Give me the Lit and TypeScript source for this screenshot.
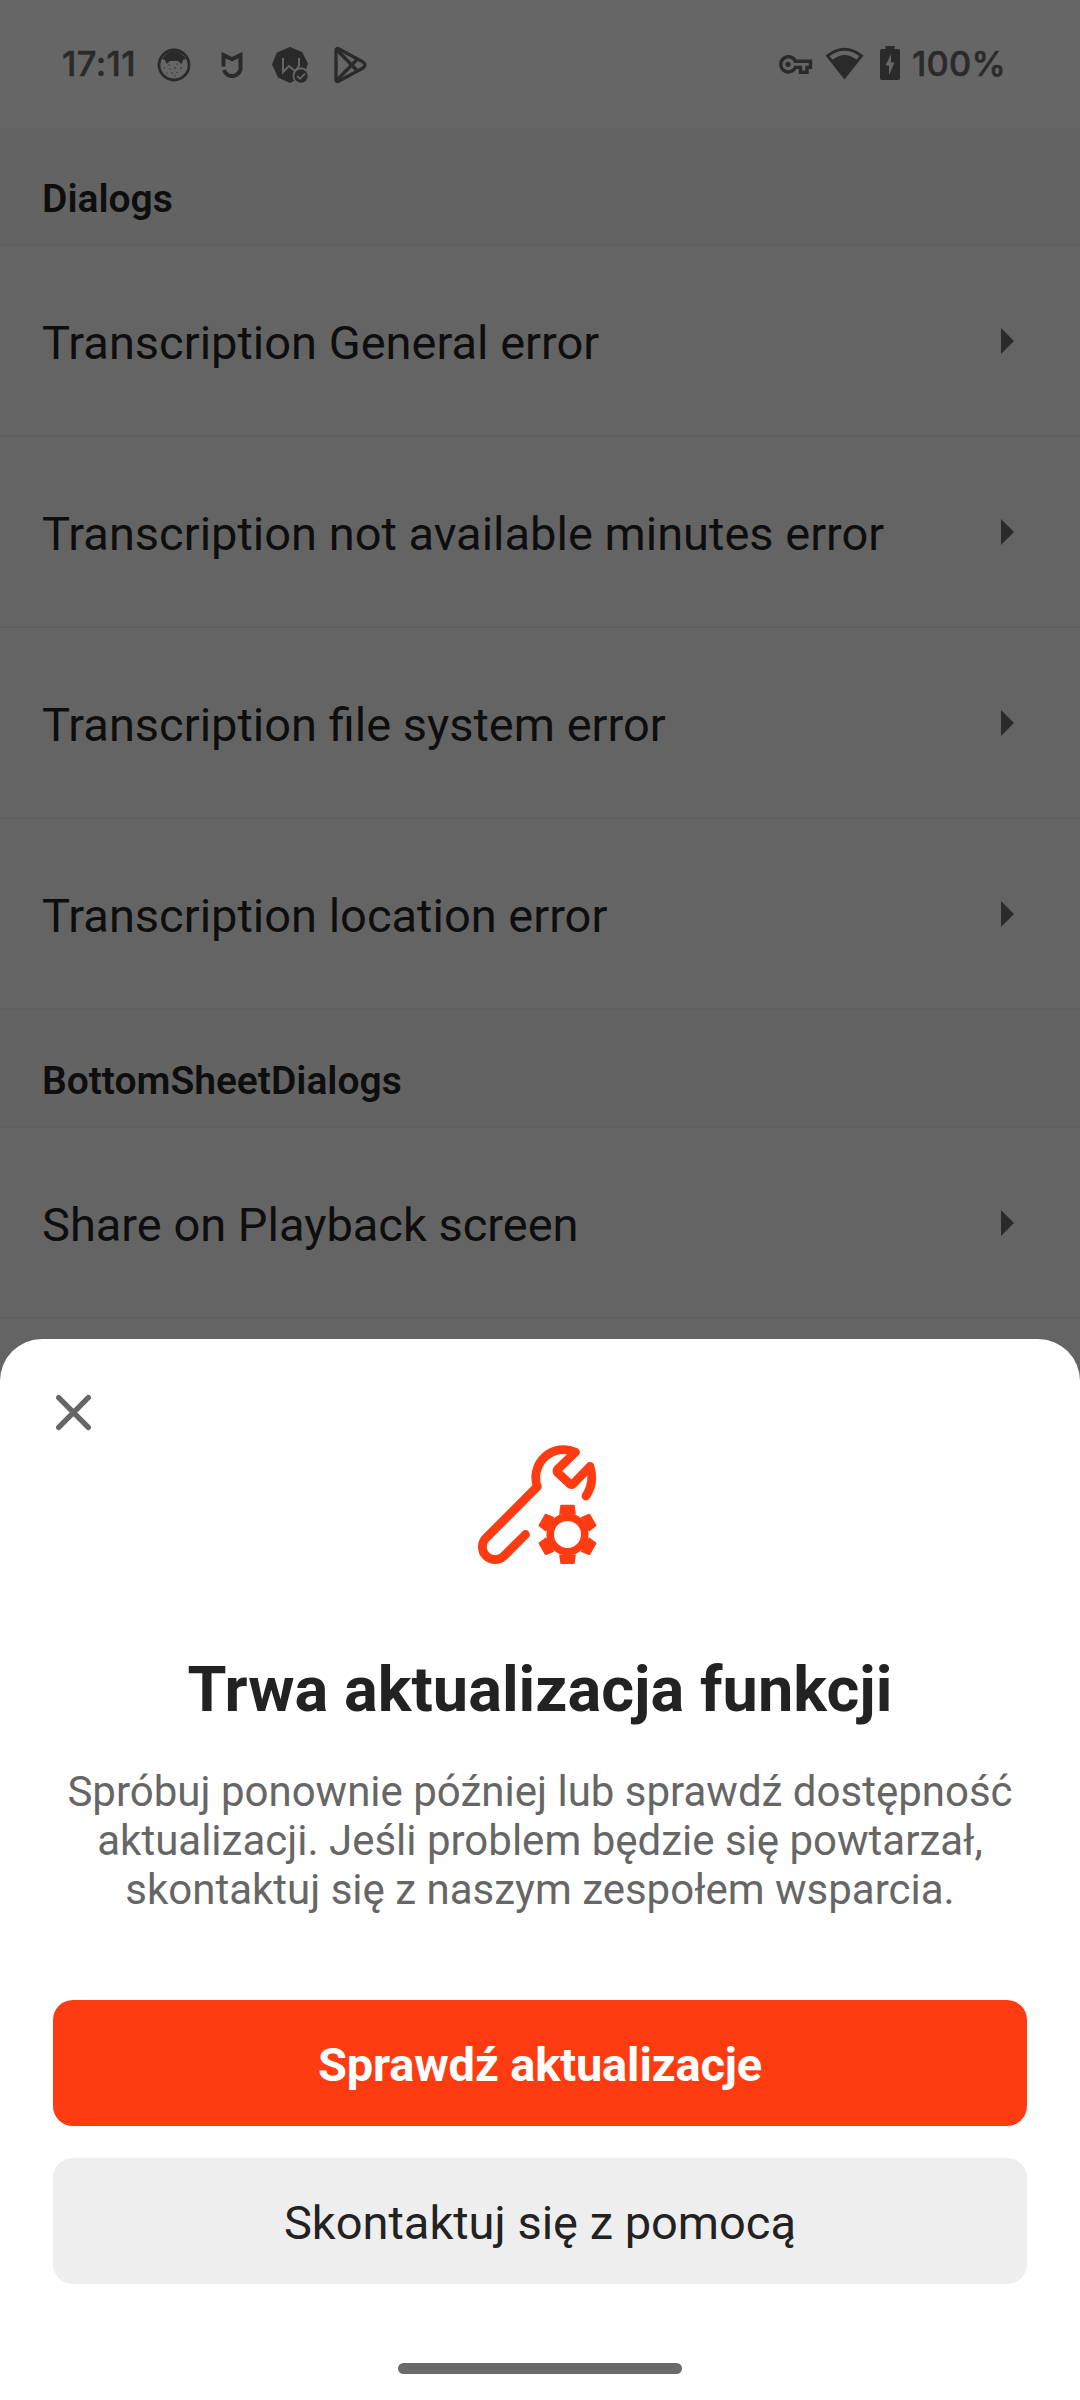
import { LitElement, html, css, svg } from "lit";
import { customElement, property } from "lit/decorators.js";

@customElement("status-bar")
class StatusBar extends LitElement {
  static styles = css`
    :host { display: block; height: 128px; background: #666; color: #2a2a2a; }
    .bar { display: flex; align-items: center; height: 128px; box-sizing: border-box; padding: 0 76px 0 62px; }
    .text { font: 500 34.5px/40px Inter, sans-serif; white-space: nowrap; -webkit-text-stroke: 0.5px #2a2a2a; }
    .time { width: 95px; letter-spacing: 0.4px; }
    .level { width: 92px; letter-spacing: 0.2px; }
    .icons { display: block; width: 216px; height: 40px; }
    .system { display: block; width: 126px; height: 40px; margin-left: auto; margin-right: 8px; }
  `;
  render() {
    return html`<div class="bar">
      <span class="text time">17:11</span>
      <svg class="icons" viewBox="157 44 216 40">
        <circle cx="174" cy="65" r="15" fill="none" stroke="#2a2a2a" stroke-width="2.8" />
        <path d="M162 59 Q174 43 186 59 L183 60 L181.500 64 L178 61 H170 L166.500 64 L165 60Z" fill="#2a2a2a" />
        <g fill="#3c3c3c"><circle cx="169" cy="65" r=".8" /><circle cx="177" cy="64" r=".8" /><circle cx="164.500" cy="68" r=".8" /><circle cx="170" cy="69" r=".8" /><circle cx="175" cy="68" r=".9" /><circle cx="181" cy="68" r=".9" /><circle cx="172" cy="73" r=".9" /><circle cx="177" cy="72.500" r=".8" /><circle cx="167" cy="73" r=".7" /><circle cx="175" cy="76" r=".7" /></g>
        <g fill="none" stroke="#2a2a2a" stroke-width="4">
          <path d="M223.500 66.500 V55 L232 59.300 L240.500 55 V61.500" />
          <path d="M240.500 61 V66 A8.500 8.500 0 0 1 224 70" />
        </g>
        <path d="M290 47 L302 52 L308 63.500 L304 75.500 L290 83 L278 77.500 L272 64.500 L277 52.500Z" fill="#2a2a2a" />
        <path d="M283 58 V72 L289 66 L295 71 L299 66 V58" fill="none" stroke="#666" stroke-width="2" />
        <circle cx="301" cy="76" r="7.600" fill="#2a2a2a" stroke="#666" stroke-width="1.800" />
        <path d="M297.200 76 L300 78.800 L305 73.500" fill="none" stroke="#666" stroke-width="1.800" />
        <g fill="none" stroke="#2a2a2a" stroke-width="3.300" stroke-linejoin="round">
          <path d="M336 50.500 Q336 47.500 339 49 L363 62 Q367 65 363 68 L339 81 Q336 82.500 336 79.500Z" />
          <path d="M337 50 L357.500 71 M337 80 L357.500 59" />
        </g>
      </svg>
      <svg class="system" viewBox="778 44 126 40">
        <g fill="none" stroke="#2a2a2a" stroke-width="3.400">
          <path d="M795.300 61.200 A7.600 7.600 0 1 0 795.300 67.400 H800.500 V72.300 H807 V67.400 H810.500 V61.200Z" />
        </g>
        <circle cx="788" cy="64.300" r="2.600" fill="#2a2a2a" />
        <path d="M825.500 55.500 Q844.500 40 863.500 55.500 L844.500 79.500Z" fill="#2a2a2a" />
        <path d="M829.500 56.200 Q844.500 45.500 859.500 56.200 L856.500 59.600 Q844.500 50.200 832.500 59.600Z" fill="#666" />
        <path d="M885.500 46 H894.500 V49 H898 Q900 49 900 51 V78 Q900 80 898 80 H882 Q880 80 880 78 V51 Q880 49 882 49 H885.500Z" fill="#2a2a2a" />
        <path d="M891 54 L885.500 65.500 H889 V75 L894.500 62.500 H891Z" fill="#666" />
      </svg>
      <span class="text level">100%</span>
    </div>`;
  }
}

@customElement("list-section")
class ListSection extends LitElement {
  @property() heading = "";
  @property({ attribute: false }) rows: string[] = [];
  static styles = css`
    :host { display: block; font-family: Roboto, sans-serif; color: #0e0e0e; }
    .heading { height: 118px; box-sizing: border-box; padding: 24px 42px 0; border-bottom: 2px solid #5f5f5f; background: #636363; font-size: 39px; line-height: 94px; font-weight: 600; letter-spacing: -0.02px; }
    .row { display: flex; align-items: center; justify-content: space-between; height: 191px; box-sizing: border-box; padding: 4px 66px 0 42px; border-bottom: 2px solid #5f5f5f; font-size: 47px; line-height: 56px; white-space: nowrap; }
    .arrow { width: 13px; height: 26px; margin-bottom: 4px; fill: #2a2a2a; }
  `;
  render() {
    return html`<div class="heading">${this.heading}</div>
      ${this.rows.map((r) => html`<div class="row"><span>${r}</span><svg class="arrow" viewBox="0 0 13 26"><path d="M0 0 L13 13 L0 26Z" /></svg></div>`)}`;
  }
}

// Six-toothed gear outline centred on (cx, cy).
const gear = (cx: number, cy: number) => {
  const teeth = [0, 60, 120, 180, 240, 300].map(
    (a) => svg`<path d="M-8.400 -20 L-7.200 -28.800 Q-7 -29.700 -6 -29.700 H6 Q7 -29.700 7.200 -28.800 L8.400 -20Z" transform="rotate(${a})" />`
  );
  return svg`<g transform="translate(${cx} ${cy})" fill="#ff3b12">${teeth}<circle r="17.300" fill="none" stroke="#ff3b12" stroke-width="7.600" /></g>`;
};

@customElement("update-sheet")
class UpdateSheet extends LitElement {
  static styles = css`
    :host { display: block; font-family: Roboto, sans-serif; }
    .sheet { height: 1061px; box-sizing: border-box; padding: 0 53px; background: #fff; border-radius: 42px 42px 0 0; display: flex; flex-direction: column; align-items: center; }
    .close { align-self: flex-start; width: 40px; height: 40px; margin-top: 53px; }
    .tool { width: 126px; height: 126px; margin-top: 10px; }
    .title { margin: 85px 0 0; font-size: 63px; line-height: 74px; font-weight: 700; color: #222; white-space: nowrap; letter-spacing: 0.05px; }
    .body { margin: 40px 0 0; font-size: 42px; line-height: 49px; color: #666; text-align: center; white-space: nowrap; }
    .button { display: block; width: 974px; height: 126px; border: 0; border-radius: 20px; font: 400 47px/126px Roboto, sans-serif; text-align: center; padding: 2px 0 0; box-sizing: border-box; }
    .primary { margin-top: 86px; background: #ff3b12; color: #fff; font-weight: 700; letter-spacing: -0.15px; }
    .secondary { margin-top: 32px; background: #eee; color: #222; }
    .handle { width: 284px; height: 11px; margin-top: 79px; border-radius: 6px; background: #6a6a6a; }
  `;
  render() {
    return html`<div class="sheet">
      <svg class="close" viewBox="53 1392 40 40"><path d="M58.700 1397.700 L88.300 1427.300 M88.300 1397.700 L58.700 1427.300" stroke="#666" stroke-width="5.400" stroke-linecap="round" /></svg>
      <svg class="tool" viewBox="477 1442 126 126">
        <path d="M525.500 1534.500 L504.100 1555.900 A12.700 12.700 0 0 1 486.100 1537.900 L537.300 1486.700 A28 28 0 0 1 575.500 1452.200 L557.500 1469.500 Q556.500 1471 557.500 1472.500 L570 1484 Q571.500 1485 573 1484 L590 1466.500 Q595 1482 586 1496" fill="none" stroke="#ff3b12" stroke-width="8.800" stroke-linecap="round" stroke-linejoin="round" />
        ${gear(567.5, 1534.4)}
      </svg>
      <h1 class="title">Trwa aktualizacja funkcji</h1>
      <p class="body">Spróbuj ponownie później lub sprawdź dostępność<br />aktualizacji. Jeśli problem będzie się powtarzał,<br />skontaktuj się z naszym zespołem wsparcia.</p>
      <button class="button primary">Sprawdź aktualizacje</button>
      <button class="button secondary">Skontaktuj się z pomocą</button>
      <div class="handle"></div>
    </div>`;
  }
}

@customElement("app-root")
class AppRoot extends LitElement {
  static styles = css`
    :host { display: block; }
    .screen { position: relative; width: 1080px; height: 2400px; overflow: hidden; background: #646464; }
    .overlay { position: absolute; left: 0; right: 0; bottom: 0; }
  `;
  render() {
    return html`<div class="screen">
      <status-bar></status-bar>
      <list-section heading="Dialogs" .rows=${["Transcription General error", "Transcription not available minutes error", "Transcription file system error", "Transcription location error"]}></list-section>
      <list-section heading="BottomSheetDialogs" .rows=${["Share on Playback screen"]}></list-section>
      <update-sheet class="overlay"></update-sheet>
    </div>`;
  }
}
